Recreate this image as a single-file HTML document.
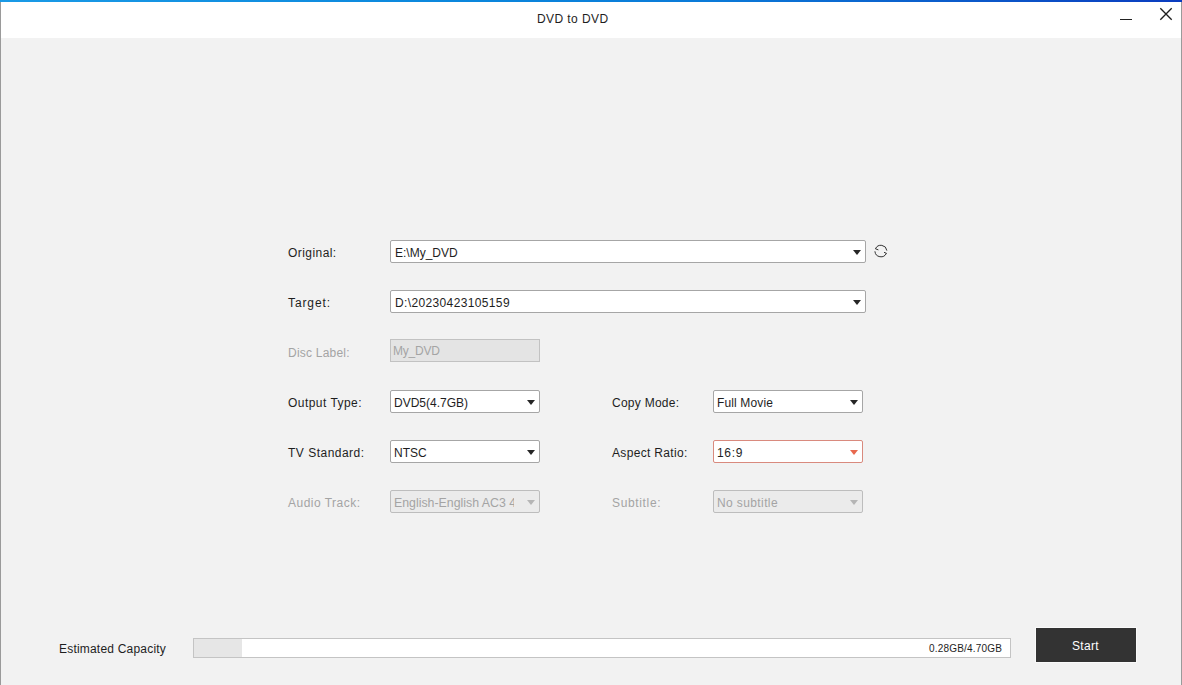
<!DOCTYPE html>
<html><head><meta charset="utf-8">
<style>
html,body{margin:0;padding:0;}
body{width:1182px;height:685px;position:relative;overflow:hidden;background:#f2f2f2;font-family:"Liberation Sans",sans-serif;color:#1e1e1e;}
.a{position:absolute;}
#hdr{left:0;top:0;width:1182px;height:38px;background:#fff;}
#bar{left:0;top:0;width:1182px;height:2px;background:linear-gradient(90deg,#1a9ae6 0%,#0a86dc 40%,#0a7ad8 60%,#0b55c8 85%,#0a3cbf 100%);}
#lb{left:0;top:2px;width:1px;height:683px;background:#9a9a9a;}
#rb{left:1181px;top:2px;width:1px;height:683px;background:#9a9a9a;}
.t{position:absolute;white-space:nowrap;font-size:12px;line-height:14px;transform-origin:0 0;}
.lbl{color:#1e1e1e;}
.dis{color:#a4a4a4;}
.cb{position:absolute;box-sizing:border-box;height:23px;background:#fff;border:1px solid #a6a6a6;border-radius:2px;overflow:hidden;}
.cb.d{background:#ebebeb;border-color:#bdbdbd;}
.cb.r{border-color:#d98a7e;}
.arr{position:absolute;width:0;height:0;border-left:4.75px solid transparent;border-right:4.75px solid transparent;border-top:5px solid #262626;}
</style></head><body>
<div id="hdr" class="a"></div>
<div id="bar" class="a"></div>
<div id="lb" class="a"></div>
<div id="rb" class="a"></div>
<div class="t" style="left:537px;top:12px;letter-spacing:0.422px;">DVD to DVD</div>
<!-- min -->
<div class="a" style="left:1120px;top:19px;width:12px;height:1px;background:#222;"></div>
<!-- close -->
<svg class="a" style="left:1158px;top:6px" width="16" height="16" viewBox="0 0 16 16"><path d="M2.3 2.3L13.7 13.7M13.7 2.3L2.3 13.7" stroke="#1e1e1e" stroke-width="1.35" fill="none"/></svg>

<!-- rows -->
<div class="t lbl" style="left:288px;top:246px;letter-spacing:0.438px;">Original:</div>
<div class="cb" style="left:390px;top:240px;width:476px;"></div>
<div class="t" style="left:395px;top:246px;">E:\My_DVD</div>
<div class="arr" style="left:853px;top:250px;"></div>
<svg class="a" style="left:868px;top:238px" width="26" height="26" viewBox="0 0 26 26"><g stroke="#333" stroke-width="1" fill="none"><path d="M7.44 10.81A6 6 0 0 1 18.86 12.62"/><path d="M7.3 10.7L10.4 11.9"/><path d="M6.92 13.29A6 6 0 0 0 18.39 15.22"/><path d="M18.6 15.4L16 14.3"/></g></svg>

<div class="t lbl" style="left:288px;top:296px;letter-spacing:0.900px;">Target:</div>
<div class="cb" style="left:390px;top:290px;width:476px;"></div>
<div class="t" style="left:395px;top:296px;letter-spacing:0.362px;">D:\20230423105159</div>
<div class="arr" style="left:853px;top:300px;"></div>

<div class="t dis" style="left:288px;top:346px;letter-spacing:0.22px;">Disc Label:</div>
<div class="a" style="left:390px;top:339px;width:150px;height:23px;box-sizing:border-box;background:#e4e4e4;border:1px solid #c2c2c2;"></div>
<div class="t dis" style="left:393px;top:344px;letter-spacing:-0.220px;">My_DVD</div>

<div class="t lbl" style="left:288px;top:396px;letter-spacing:0.464px;">Output Type:</div>
<div class="cb" style="left:390px;top:390px;width:150px;"></div>
<div class="t" style="left:394px;top:396px;">DVD5(4.7GB)</div>
<div class="arr" style="left:527px;top:400px;"></div>

<div class="t lbl" style="left:612px;top:396px;letter-spacing:0.256px;">Copy Mode:</div>
<div class="cb" style="left:713px;top:390px;width:150px;"></div>
<div class="t" style="left:717px;top:396px;letter-spacing:0.133px;">Full Movie</div>
<div class="arr" style="left:850px;top:400px;"></div>

<div class="t lbl" style="left:288px;top:446px;letter-spacing:0.491px;">TV Standard:</div>
<div class="cb" style="left:390px;top:440px;width:150px;"></div>
<div class="t" style="left:394px;top:446px;">NTSC</div>
<div class="arr" style="left:527px;top:450px;"></div>

<div class="t lbl" style="left:612px;top:446px;letter-spacing:0.325px;">Aspect Ratio:</div>
<div class="cb r" style="left:713px;top:440px;width:150px;"></div>
<div class="t" style="left:717px;top:446px;letter-spacing:0.700px;">16:9</div>
<div class="arr" style="left:850px;top:450px;border-top-color:#e8694f;"></div>

<div class="t dis" style="left:288px;top:496px;letter-spacing:0.482px;">Audio Track:</div>
<div class="cb d" style="left:390px;top:490px;width:150px;"></div>
<div class="a" style="left:394px;top:496px;width:120px;height:16px;overflow:hidden;"><div class="t dis" style="left:0;top:0;transform:scaleX(1.028);">English-English AC3 4</div></div>
<div class="arr" style="left:527px;top:500px;border-top-color:#b5b5b5;"></div>

<div class="t dis" style="left:612px;top:496px;letter-spacing:0.650px;">Subtitle:</div>
<div class="cb d" style="left:713px;top:490px;width:150px;"></div>
<div class="t dis" style="left:717px;top:496px;letter-spacing:0.390px;">No subtitle</div>
<div class="arr" style="left:850px;top:500px;border-top-color:#b5b5b5;"></div>

<!-- bottom -->
<div class="t lbl" style="left:59px;top:642px;letter-spacing:0.2px;">Estimated Capacity</div>
<div class="a" style="left:193px;top:638px;width:818px;height:20px;box-sizing:border-box;background:#fff;border:1px solid #c4c4c4;"></div>
<div class="a" style="left:194px;top:639px;width:48px;height:18px;background:#e6e6e6;"></div>
<div class="t" style="left:929px;top:642px;font-size:10px;letter-spacing:0.2px;">0.28GB/4.70GB</div>
<div class="a" style="left:1035px;top:627px;width:100px;height:34px;background:#333;border:1px solid #fafafa;"></div>
<div class="t" style="left:1072px;top:639px;color:#fff;letter-spacing:0.325px;">Start</div>
</body></html>
